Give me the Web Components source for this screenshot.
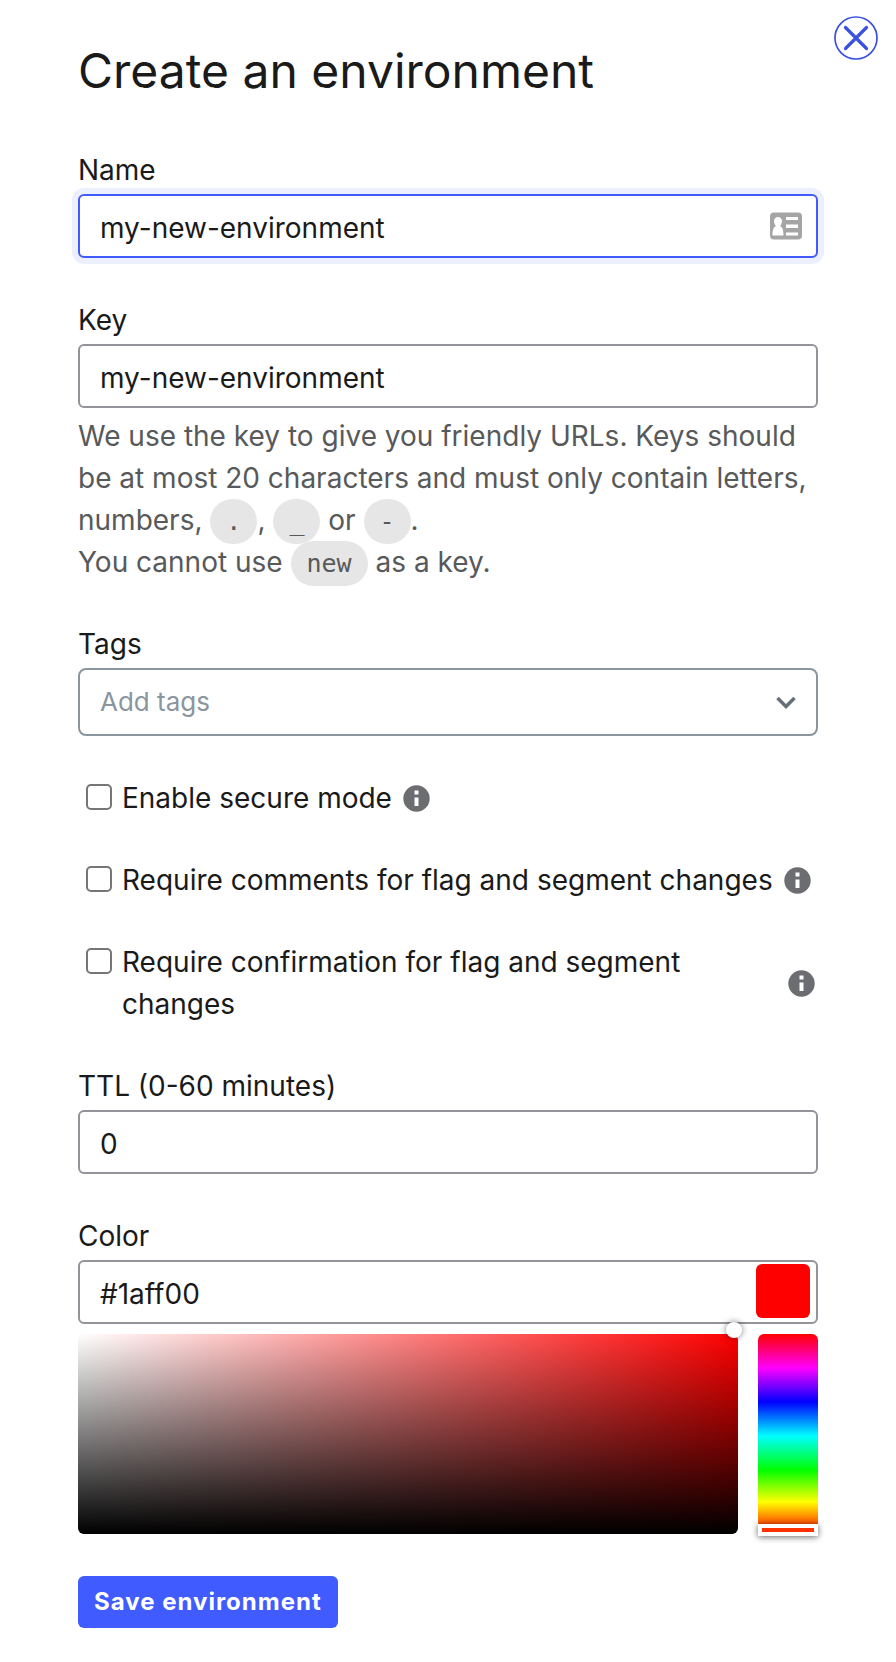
<!DOCTYPE html>
<html lang="en">
<head>
<meta charset="utf-8">
<meta name="viewport" content="width=device-width, initial-scale=1">
<title>Create an environment</title>
<style>
  body {
    margin: 0;
    background: #fff;
    color: #1a1a1a;
    font: 400 28px/42px Inter, "Liberation Sans", sans-serif;
    --border: #939399;
    --blue: #405bff;
  }
</style>
</head>
<body>
<env-panel heading="Create an environment">
  <env-field label="Name" value="my-new-environment" active><contact-icon slot="end"></contact-icon></env-field>
  <env-field label="Key" value="my-new-environment"><key-help slot="help"></key-help></env-field>
  <env-select label="Tags" placeholder="Add tags"></env-select>
  <env-check label="Enable secure mode"></env-check>
  <env-check label="Require comments for flag and segment changes"></env-check>
  <env-check label="Require confirmation for flag and segment changes"></env-check>
  <env-field label="TTL (0-60 minutes)" value="0"></env-field>
  <env-field label="Color" value="#1aff00">
    <color-swatch slot="end"></color-swatch>
    <color-picker slot="help"></color-picker>
  </env-field>
  <env-button>Save environment</env-button>
</env-panel>

<script>
  const define = (name, template) => customElements.define(name, class extends HTMLElement {
    constructor() {
      super();
      const text = (attr) => this.getAttribute(attr) || '';
      this.attachShadow({ mode: 'open' }).innerHTML =
        '<style>*{box-sizing:border-box}</style>' + template(text);
    }
  });

  define('env-panel', (a) => `
    <style>
      :host { display: block; position: relative; padding: 40px 78px 34px; }
      h1 { margin: 0 0 47px; font-size: 48px; line-height: 62px; font-weight: 400; }
      form { display: flex; flex-direction: column; gap: 40px; }
      .close {
        position: absolute; top: 16px; right: 18px;
        width: 44px; height: 44px; padding: 0; border: 0; background: none; cursor: pointer;
      }
      svg { display: block; }
    </style>
    <button class="close" type="button" aria-label="Close">
      <svg width="44" height="44" viewBox="0 0 44 44" fill="none" stroke="#3a50df">
        <circle cx="22" cy="22" r="21" stroke-width="1.7"/>
        <path d="M11.5 11.5 32.5 32.5M32.5 11.5 11.5 32.5" stroke-width="3.2" stroke-linecap="round"/>
      </svg>
    </button>
    <h1>${a('heading')}</h1>
    <form><slot></slot></form>`);

  define('env-field', (a) => `
    <style>
      :host { display: block; }
      label { display: block; margin-bottom: 3px; }
      .box { position: relative; margin-bottom: 1px; }
      input {
        display: block; width: 100%; height: 64px; padding: 4px 20px 0; font: inherit; color: inherit;
        border: 2px solid var(--border); border-radius: 6px; background: #fff; outline: none;
      }
      :host([active]) input { border-color: var(--blue); box-shadow: 0 0 0 6px #eceffe; }
      .end { position: absolute; top: 0; bottom: 0; right: 0; display: flex; align-items: center; }
    </style>
    <label for="control">${a('label')}</label>
    <div class="box">
      <input id="control" type="text" value="${a('value')}">
      <div class="end"><slot name="end"></slot></div>
    </div>
    <slot name="help"></slot>`);

  define('contact-icon', () => `
    <style>:host { display: block; margin-right: 16px; } svg { display: block; }</style>
    <svg width="32" height="28" viewBox="0 0 32 28">
      <rect y="0.5" width="32" height="27" rx="4" fill="#a5a5a5"/>
      <path fill="#fff" d="M8 5a4 4 0 0 1 4 4.200c0 2-1 4-2 4.800 2.500 1 3.500 4 3.500 9.500H2.500C2.500 18 3.500 15 6 14c-1-.8-2-2.800-2-4.800A4 4 0 0 1 8 5zM16 5h12v3H16zM16 12.500h12v3.500H16zM16 20.500h12v3H16z"/>
    </svg>`);

  define('key-help', () => `
    <style>
      :host { display: block; margin-top: 7px; color: #58595b; }
      p { margin: 0; }
      code {
        padding: 8px 16px; border-radius: 23px; background: #e6e6e6;
        font: 25px/1 "DejaVu Sans Mono", monospace;
      }
    </style>
    <p>We use the key to give you friendly URLs. Keys should be at most 20 characters and must only contain letters, numbers, <code>.</code>, <code>_</code> or <code>-</code>.</p>
    <p>You cannot use <code>new</code> as a key.</p>`);

  define('env-select', (a) => `
    <style>
      :host { display: block; }
      label { display: block; margin-bottom: 3px; }
      .box { position: relative; margin-bottom: 1px; }
      select {
        appearance: none; display: block; width: 100%; height: 68px; padding: 0 20px;
        font: inherit; font-size: 26px; color: #8b959e;
        border: 2px solid #8b959e; border-radius: 8px; background: #fff;
      }
      svg { position: absolute; top: 26px; right: 20px; pointer-events: none; }
    </style>
    <label for="control">${a('label')}</label>
    <div class="box">
      <select id="control"><option>${a('placeholder')}</option></select>
      <svg width="24" height="18" viewBox="0 0 24 18" fill="none" stroke="#646f7a" stroke-width="3.500">
        <path d="M3.500 4 12 12.500 20.500 4"/>
      </svg>
    </div>`);

  define('env-check', (a) => `
    <style>
      :host { display: flex; align-items: center; gap: 8px; padding-left: 8px; }
      .option { display: flex; align-items: flex-start; gap: 10px; }
      input {
        appearance: none; flex: none; width: 26px; height: 26px; margin: 7px 0 0;
        border: 2px solid #767676; border-radius: 5px; background: #fff;
      }
      .info { flex: none; padding: 3px; border: 0; background: none; }
      svg { display: block; }
    </style>
    <div class="option">
      <input id="control" type="checkbox">
      <label for="control">${a('label')}</label>
    </div>
    <button class="info" type="button" aria-label="More information">
      <svg width="27" height="27" viewBox="0 0 27 27">
        <circle cx="13.500" cy="13.500" r="13.200" fill="#6c6d71"/>
        <path fill="#fff" d="M11.500 5.500h4v4h-4zM11.500 12.500h4v8.500h-4z"/>
      </svg>
    </button>`);

  define('color-swatch', () => `
    <style>:host { display: block; width: 54px; height: 54px; margin-right: 8px; margin-bottom: 2px; border-radius: 6px; background: red; }</style>`);

  define('color-picker', () => `
    <style>
      :host { display: flex; gap: 20px; height: 200px; margin-top: 10px; }
      .shade {
        position: relative; flex: 1; border-radius: 6px;
        background: linear-gradient(to top, #000, transparent), linear-gradient(to right, #fff, red);
      }
      .hue {
        position: relative; flex: none; width: 60px; border-radius: 6px;
        background: linear-gradient(to bottom, red, #f0f 17%, #00f 34%, #0ff 51%, #0f0 68%, #ff0 84%, red);
      }
      .dot {
        position: absolute; top: -12px; right: -4px; width: 16px; height: 16px;
        border-radius: 50%; background: #fff; box-shadow: 0 0 6px rgba(0, 0, 0, .5);
      }
      .bar {
        position: absolute; left: 0; right: 0; bottom: -2px; height: 12px;
        border: 4px solid #fff; background: #ff3000; box-shadow: 0 1px 6px rgba(0, 0, 0, .6);
      }
    </style>
    <div class="shade"><span class="dot"></span></div>
    <div class="hue"><span class="bar"></span></div>`);

  define('env-button', () => `
    <style>
      :host { display: block; padding-top: 2px; }
      button {
        display: block; height: 52px; padding: 0 16px; border: 0; border-radius: 6px; cursor: pointer;
        font: inherit; font-size: 24px; font-weight: 700; letter-spacing: 1px;
        background: var(--blue); color: #fff;
      }
    </style>
    <button type="button"><slot></slot></button>`);
</script>
</body>
</html>
